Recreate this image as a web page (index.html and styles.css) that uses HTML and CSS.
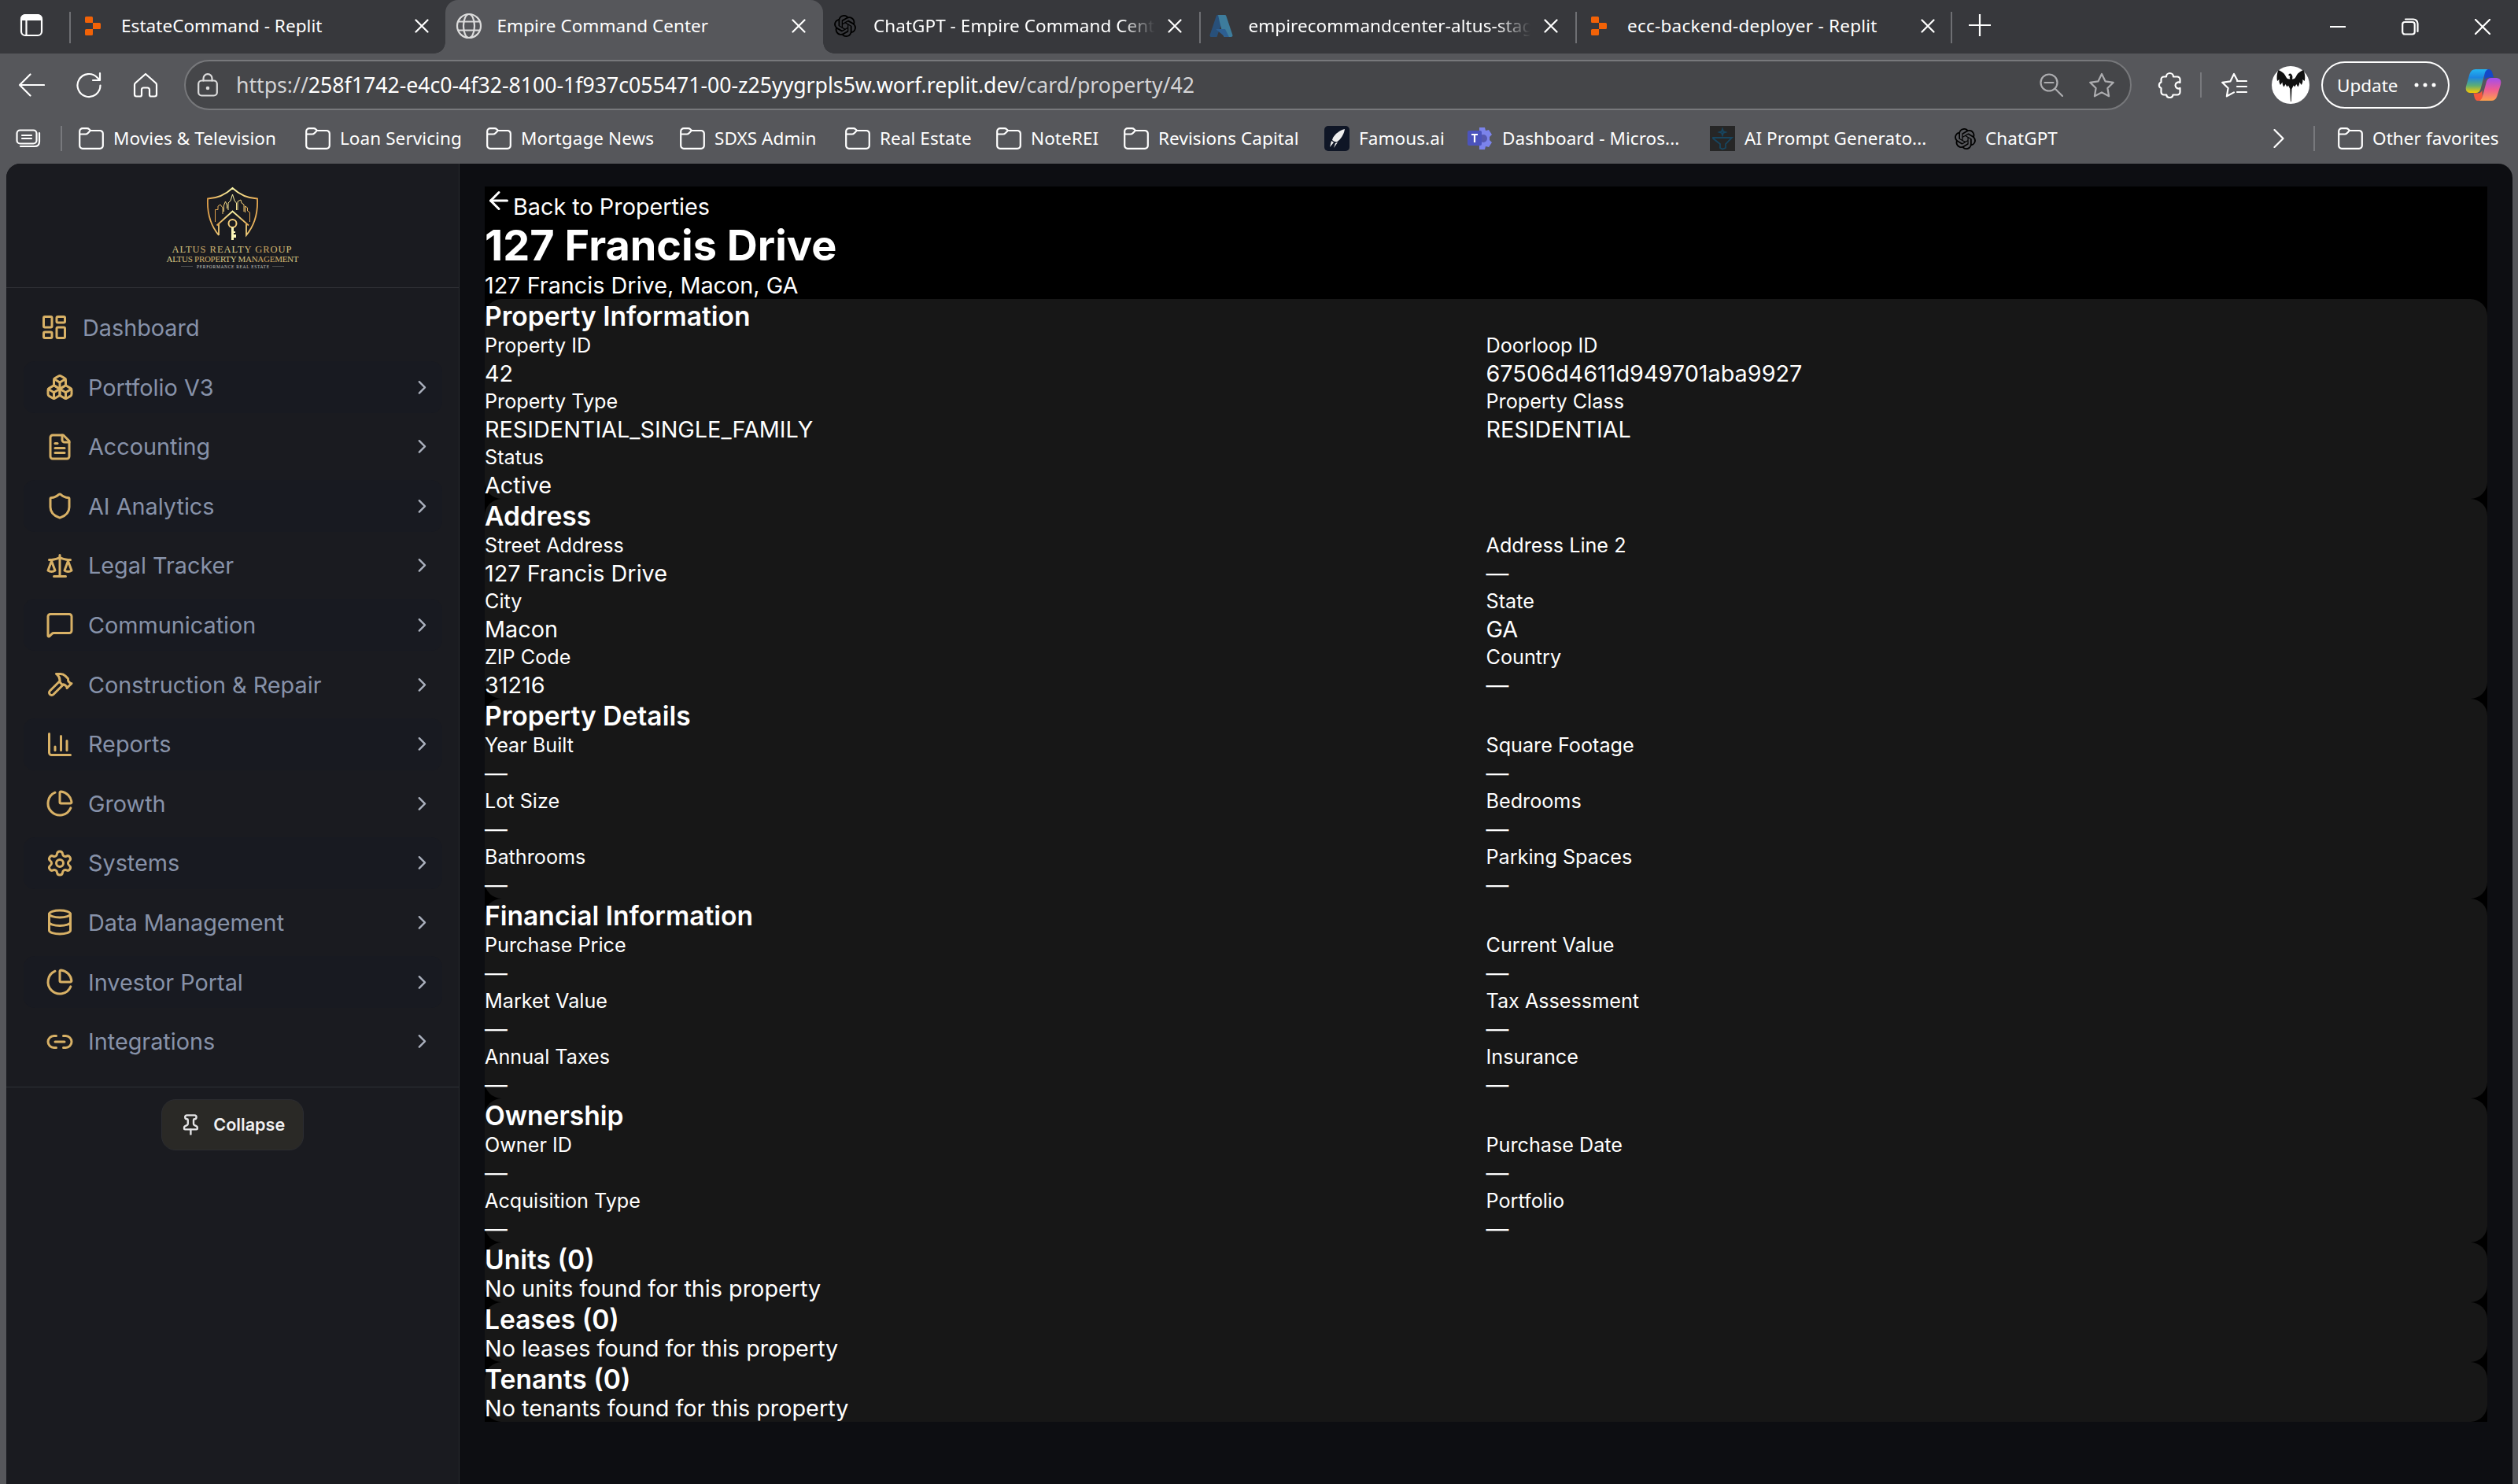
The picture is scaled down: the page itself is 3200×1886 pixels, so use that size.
FILE: index.html
```html
<!DOCTYPE html>
<html lang="en">
<head>
<meta charset="utf-8">
<title>Empire Command Center</title>
<link rel="stylesheet" href="styles.css">
</head>
<body>
<svg class="sprite" aria-hidden="true">
  <symbol id="i-x" viewBox="0 0 18 18"><path d="M1.5 1.5l15 15M16.500 1.500l-15 15"/></symbol>
  <symbol id="i-folder" viewBox="0 0 32 28"><path d="M1.200 8.500h7.600a4 4 0 0 0 2.800-1.200l2.300-2.400M1.200 8V5A3.800 3.800 0 0 1 5 1.200h5.600a4 4 0 0 1 2.700 1.100l1.800 1.700h11.900A3.800 3.800 0 0 1 30.800 7.800v15.200a3.800 3.800 0 0 1-3.800 3.800H5A3.800 3.800 0 0 1 1.200 23z"/></symbol>
  <symbol id="i-replit" viewBox="0 0 20 24"><path d="M1.500 0h7A1.500 1.500 0 0 1 10 1.500V8H1.500A1.500 1.500 0 0 1 0 6.500v-5A1.500 1.500 0 0 1 1.500 0zM10 8h8.500A1.500 1.500 0 0 1 20 9.500v5a1.500 1.500 0 0 1-1.500 1.500H10zM1.500 16H10v6.500A1.500 1.500 0 0 1 8.500 24h-7A1.500 1.500 0 0 1 0 22.500v-5A1.500 1.500 0 0 1 1.500 16z"/></symbol>
  <symbol id="i-knot" viewBox="0 0 24 24"><path d="M22.2819 9.8211a5.9847 5.9847 0 0 0-.5157-4.9108 6.0462 6.0462 0 0 0-6.5098-2.9A6.0651 6.0651 0 0 0 4.9807 4.1818a5.9847 5.9847 0 0 0-3.9977 2.9 6.0462 6.0462 0 0 0 .7427 7.0966 5.98 5.98 0 0 0 .511 4.9107 6.051 6.051 0 0 0 6.5146 2.9001A5.9847 5.9847 0 0 0 13.2599 24a6.0557 6.0557 0 0 0 5.7718-4.2058 5.9894 5.9894 0 0 0 3.9977-2.9001 6.0557 6.0557 0 0 0-.7475-7.0729zm-9.022 12.6081a4.4755 4.4755 0 0 1-2.8764-1.0408l.1419-.0804 4.7783-2.7582a.7948.7948 0 0 0 .3927-.6813v-6.7369l2.02 1.1686a.071.071 0 0 1 .038.052v5.5826a4.504 4.504 0 0 1-4.4945 4.4944zm-9.6607-4.1254a4.4708 4.4708 0 0 1-.5346-3.0137l.142.0852 4.783 2.7582a.7712.7712 0 0 0 .7806 0l5.8428-3.3685v2.3324a.0804.0804 0 0 1-.0332.0615L9.74 19.9502a4.4992 4.4992 0 0 1-6.1408-1.6464zM2.3408 7.8956a4.485 4.485 0 0 1 2.3655-1.9728V11.6a.7664.7664 0 0 0 .3879.6765l5.8144 3.3543-2.0201 1.1685a.0757.0757 0 0 1-.071 0l-4.8303-2.7865A4.504 4.504 0 0 1 2.3408 7.872zm16.5963 3.8558L13.1038 8.364 15.1192 7.2a.0757.0757 0 0 1 .071 0l4.8303 2.7913a4.4944 4.4944 0 0 1-.6765 8.1042v-5.6772a.79.79 0 0 0-.407-.667zm2.0107-3.0231l-.142-.0852-4.7735-2.7818a.7759.7759 0 0 0-.7854 0L9.409 9.2297V6.8974a.0662.0662 0 0 1 .0284-.0615l4.8303-2.7866a4.4992 4.4992 0 0 1 6.6802 4.66zM8.3065 12.863l-2.02-1.1638a.0804.0804 0 0 1-.038-.0567V6.0742a4.4992 4.4992 0 0 1 7.3757-3.4537l-.142.0805L8.704 5.459a.7948.7948 0 0 0-.3927.6813zm1.0976-2.3654l2.602-1.4998 2.6069 1.4998v2.9994l-2.5974 1.4997-2.6067-1.4997Z"/></symbol>
  <symbol id="i-chevron" viewBox="0 0 24 24"><path d="m9 18 6-6-6-6"/></symbol>
  <symbol id="i-pie" viewBox="0 0 24 24"><path d="M21 12c.552 0 1.005-.449.95-.998a10 10 0 0 0-8.953-8.951c-.55-.055-.998.398-.998.95v8a1 1 0 0 0 1 1z"/><path d="M21.210 15.890A10 10 0 1 1 8 2.830"/></symbol>
</svg>

<header class="chrome">
  <div class="tabstrip">
    <div class="tab-actions"><svg width="30" height="30" viewBox="0 0 30 30" class="line"><rect x="2" y="2" width="26" height="26" rx="5"/><path d="M2 8a6 6 0 0 1 6-6h14a6 6 0 0 1 6 6z" fill="#fff"/><path d="M8.500 8v20"/></svg></div>
    <div class="tab">
      <svg class="fav replit" width="20" height="24"><use href="#i-replit"/></svg>
      <span class="tab-title">EstateCommand - Replit</span>
      <svg class="close line" width="18" height="18"><use href="#i-x"/></svg>
    </div>
    <div class="tab active">
      <svg class="fav line soft" width="34" height="34" viewBox="0 0 34 34"><circle cx="17" cy="17" r="15"/><ellipse cx="17" cy="17" rx="7" ry="15"/><path d="M3.500 11.500h27M3.500 22.500h27"/></svg>
      <span class="tab-title">Empire Command Center</span>
      <svg class="close line" width="18" height="18"><use href="#i-x"/></svg>
    </div>
    <div class="tab">
      <svg class="fav" width="28" height="28"><use href="#i-knot"/></svg>
      <span class="tab-title fade">ChatGPT - Empire Command Center</span>
      <svg class="close line" width="18" height="18"><use href="#i-x"/></svg>
    </div>
    <div class="tab">
      <svg class="fav" width="30" height="28" viewBox="0 0 30 28"><path d="M10 0h9L9.500 28H2.500a2 2 0 0 1-1.900-2.700L8.700 1.500Q9.200 0 10 0z" fill="#28507a"/><path d="M11 0h8.500a2 2 0 0 1 1.900 1.400l8 24A2 2 0 0 1 27.500 28H20q-1.600 0-2.200-1.600L15 17l-2-8z" fill="#3d7c9c"/><path d="M8 18h12l5 10h-5z" fill="#2d5f92"/></svg>
      <span class="tab-title fade">empirecommandcenter-altus-staging</span>
      <svg class="close line" width="18" height="18"><use href="#i-x"/></svg>
    </div>
    <div class="tab">
      <svg class="fav replit" width="20" height="24"><use href="#i-replit"/></svg>
      <span class="tab-title wide">ecc-backend-deployer - Replit</span>
      <svg class="close line" width="18" height="18"><use href="#i-x"/></svg>
    </div>
    <svg class="new-tab line" width="28" height="28" viewBox="0 0 28 28"><path d="M14 0v28M0 14h28"/></svg>
    <div class="window-buttons">
      <svg class="line" width="20" height="20" viewBox="0 0 20 20"><path d="M0 10h20"/></svg>
      <svg class="line" width="22" height="22" viewBox="0 0 22 22"><rect x="1.200" y="5" width="15.500" height="15.500" rx="3"/><path d="M5 1.500h10a5.500 5.500 0 0 1 5.500 5.500v10"/></svg>
      <svg class="line" width="20" height="20" viewBox="0 0 20 20"><path d="M0.500 0.500l19 19M19.500 0.500l-19 19"/></svg>
    </div>
  </div>

  <div class="toolbar">
    <div class="nav-buttons">
      <svg class="line" width="34" height="32" viewBox="0 0 34 32"><path d="M33 16H2M15.500 2.500L2 16l13.500 13.500"/></svg>
      <svg class="line" width="34" height="34" viewBox="0 0 34 34"><path d="M31.500 17.500A14.500 14.500 0 1 1 27.500 7.500L30.500 10.500M31 2v9h-9"/></svg>
      <svg class="line" width="32" height="32" viewBox="0 0 32 32"><path d="M16 2L3 13.500a3 3 0 0 0-1 2.200V28a2.500 2.500 0 0 0 2.500 2.500h4.500a2 2 0 0 0 2-2V22a2.500 2.500 0 0 1 2.500-2.500h5a2.500 2.500 0 0 1 2.500 2.500v6.500a2 2 0 0 0 2 2h4.500A2.500 2.500 0 0 0 30 28V15.700a3 3 0 0 0-1-2.200z"/></svg>
    </div>
    <div class="address">
      <svg class="line soft" width="26" height="30" viewBox="0 0 26 30"><rect x="1.200" y="9.500" width="23.600" height="19" rx="4"/><path d="M7.500 9.500V6.700a5.500 5.500 0 0 1 11 0v2.800"/><circle cx="13" cy="19" r="1.200" fill="#ddd"/></svg>
      <span class="url"><span class="dim">https://</span>258f1742-e4c0-4f32-8100-1f937c055471-00-z25yygrpls5w.worf.replit.dev<span class="dim">/card/property/42</span></span>
      <svg class="line faint" width="30" height="30" viewBox="0 0 30 30"><circle cx="12" cy="12" r="10.500"/><path d="M19.500 19.500l9.500 9.500M6.500 12h11"/></svg>
      <svg class="line faint star" width="34" height="32" viewBox="0 0 34 32"><path d="M17 2l4.500 9.300 10.300 1.500-7.400 7.200 1.700 10.300L17 25.400l-9.100 4.900 1.700-10.300-7.400-7.200 10.300-1.500z"/></svg>
    </div>
    <svg class="line puzzle" width="30" height="34" viewBox="0 0 30 34"><path d="M11 6.500a4.500 4.500 0 0 1 9 0h5a3.500 3.500 0 0 1 3.500 3.500v4a4 4 0 1 0 0 7v5a3.500 3.500 0 0 1-3.500 3.500h-5.500a4.200 4.200 0 0 1-8.300 0H8A3.500 3.500 0 0 1 4.500 26v-5a4 4 0 0 1 0-7.500V10A3.500 3.500 0 0 1 8 6.500z"/></svg>
    <span class="rule"></span>
    <svg class="line favs" width="34" height="32" viewBox="0 0 34 32"><path d="M21 9.500L17 2l-4.500 9.300-10.300 1.500 7.400 7.200-1.700 10.300L17 25.400M21 11h12M21 18h12M21 25h12"/></svg>
    <svg class="avatar" width="48" height="48" viewBox="0 0 48 48"><circle cx="24" cy="24" r="24" fill="#fff"/><path d="M23.500 9.500c-1.500 0-2.500 1.200-2 2.500l2.200.8c-1.200 1-1 2.700-.2 3.700-3.500.5-5-1.500-6.500-5C15.500 8.500 11 6 8.500 5c-2 4-2.500 10-1.500 14l2.500-2c-.5 3 .5 5 1.500 7l2.500-3.500c0 2 .5 4 2 6l2-3.500 2 3.500 1.500-2 2.300 4.500.7 16h.8l.7-16 2.300-4.500 1.500 2 2-3.500 2 3.500c1.500-2 2-4 2-6l2.500 3.500c1-2 2-4 1.500-7l2.500 2c1-4 .5-10-1.500-14-2.500 1-7 3.500-8.500 6.500-1.500 3.500-3 5.500-6 5 1-1.500.8-4-.3-5.500-.5-.9-1-1.500-2.500-1.500z" fill="#111"/></svg>
    <div class="update"><span>Update</span><svg width="28" height="6" viewBox="0 0 28 6"><g fill="#fff"><circle cx="3" cy="3" r="2.500"/><circle cx="14" cy="3" r="2.500"/><circle cx="25" cy="3" r="2.500"/></g></svg></div>
    <svg class="copilot" width="46" height="42" viewBox="0 0 46 42">
      <defs>
        <linearGradient id="cp1" x1="0" y1="0" x2="0" y2="1"><stop offset="0" stop-color="#23b4f0"/><stop offset=".35" stop-color="#1c86e0"/><stop offset=".7" stop-color="#5fae72"/><stop offset="1" stop-color="#fdc900"/></linearGradient>
        <linearGradient id="cp2" x1="0" y1="0" x2="0" y2="1"><stop offset="0" stop-color="#a14df0"/><stop offset=".5" stop-color="#ee5a94"/><stop offset="1" stop-color="#fda14c"/></linearGradient>
      </defs>
      <path d="M24 1h5.500q3.500 0 4.600 3.600l2 7H30q-4 0-5.500 4z" fill="#1448c8"/>
      <path d="M22 41h-5.500q-3.500 0-4.600-3.600l-1.500-6H16q4 0 5.500-4z" fill="#f5583c"/>
      <path d="M13 1h16q-3 .8-4.200 5l-5.300 20q-1.500 5-6 5H6q-7-1-4.800-9L5.500 7Q7.500 1 13 1z" fill="url(#cp1)"/>
      <path d="M33 41H17.500q3-.8 4.200-5L27 16.500q1.500-4.500 6-4.500h7q7 1 4.800 9L40.500 35Q38.500 41 33 41z" fill="url(#cp2)"/>
    </svg>
  </div>

  <div class="bookmarks">
    <svg class="line workspaces" width="32" height="24" viewBox="0 0 32 24"><rect x="1.500" y="1.500" width="25" height="17" rx="4"/><path d="M8 8h12M8 12h12M30 5v11q0 6-6 6H6"/></svg>
    <span class="rule"></span>
    <div class="bookmark-list">
      <span class="bm"><svg class="line" width="32" height="28"><use href="#i-folder"/></svg><span>Movies &amp; Television</span></span>
      <span class="bm"><svg class="line" width="32" height="28"><use href="#i-folder"/></svg><span>Loan Servicing</span></span>
      <span class="bm"><svg class="line" width="32" height="28"><use href="#i-folder"/></svg><span>Mortgage News</span></span>
      <span class="bm"><svg class="line" width="32" height="28"><use href="#i-folder"/></svg><span>SDXS Admin</span></span>
      <span class="bm"><svg class="line" width="32" height="28"><use href="#i-folder"/></svg><span>Real Estate</span></span>
      <span class="bm"><svg class="line" width="32" height="28"><use href="#i-folder"/></svg><span>NoteREI</span></span>
      <span class="bm"><svg class="line" width="32" height="28"><use href="#i-folder"/></svg><span>Revisions Capital</span></span>
      <span class="bm"><svg width="32" height="32" viewBox="0 0 32 32"><rect width="32" height="32" rx="5" fill="#0f1626"/><path d="M26 4C19 6 14 10 11 15l-1 3 3 2 3 .5C21 17 25 11 26 4zM9 19l-2 8 5-6zM14 22l-2 6 5-7z" fill="#eee"/></svg><span>Famous.ai</span></span>
      <span class="bm"><svg width="32" height="28" viewBox="0 0 32 28"><path d="M15 0h7l1 4 4-1 4 6-3 3v4l3 3-4 6-4-1-1 4h-7z" fill="#7b83eb"/><circle cx="20" cy="14" r="5" fill="#5558af"/><rect y="4" width="18" height="19" rx="2" fill="#4b53bc"/><path d="M5 9h8M9 9v10" stroke="#fff" stroke-width="2.200"/></svg><span>Dashboard - Micros...</span></span>
      <span class="bm"><svg width="32" height="32" viewBox="0 0 32 32"><rect width="32" height="32" fill="#262626"/><g fill="none" stroke="#17455f" stroke-width="1.800"><path d="M16 4l1 3 3 1-3 1-1 3-1-3-3-1 3-1z"/><path d="M4 15h24l-8 8v5l-4 1.500-3-1.500v-5L4 16z"/></g></svg><span>AI Prompt Generato...</span></span>
      <span class="bm"><svg width="27" height="27"><use href="#i-knot"/></svg><span>ChatGPT</span></span>
    </div>
    <svg class="line more" width="14" height="24" viewBox="0 0 14 24"><path d="M1.500 1l11 11-11 11"/></svg>
    <span class="rule"></span>
    <span class="bm other"><svg class="line" width="32" height="28"><use href="#i-folder"/></svg><span>Other favorites</span></span>
  </div>
</header>

<div class="app">
  <aside class="sidebar">
    <div class="brand">
      <svg width="210" height="130" viewBox="0 0 210 130">
        <defs><linearGradient id="gold" x1="0" x2="1"><stop offset="0" stop-color="#e0a04a"/><stop offset=".5" stop-color="#fbf6a8"/><stop offset="1" stop-color="#e6a850"/></linearGradient>
        <linearGradient id="goldtext" x1="0" x2="1"><stop offset="0" stop-color="#ddd088"/><stop offset=".3" stop-color="#c9a562"/><stop offset=".5" stop-color="#e0d892"/><stop offset=".75" stop-color="#c9a05c"/><stop offset="1" stop-color="#ddd088"/></linearGradient></defs>
        <g fill="none" stroke="url(#gold)" stroke-width="1.800" stroke-linejoin="miter">
          <path d="M88 74C78 62 73 46 74 27.500 86 27 97 22 105.500 14 114 22 125 27 137 27.500 138 46 133 62 123 74V60M88 74V60"/>
          <path d="M85.500 61.500L105.500 43.500l20.500 18"/>
          <path stroke-width="1" d="M83.500 57V41.500h3.500V37l3-2 3 4v8M94.500 44V36l2-5 2 5v4M100 42V33l3-3 2.500-8 2.500 8 2.500 3v9M112 42V31l4-2 1 4 3 2v9M121.500 45v-8l3 2v4l3 2v12"/>
        </g>
        <circle cx="105.500" cy="59" r="5" fill="none" stroke="#f6cf7d" stroke-width="2"/><path d="M104 64h3v5h2v2h-2v2h3v4h-3v3h-3z" fill="#fbf6b8"/>
        <g font-family="Liberation Serif, serif" text-anchor="middle" fill="url(#goldtext)">
          <text x="104.500" y="95.500" font-size="12.500" textLength="152">ALTUS REALTY GROUP</text>
          <text x="105.500" y="107.500" font-size="11" textLength="168">ALTUS PROPERTY MANAGEMENT</text>
          <text x="106" y="115.500" font-size="5.500" textLength="92" fill="#c8c8c0">PERFORMANCE REAL ESTATE</text>
        </g>
        <path d="M40 113.500h15M156 113.500h15" stroke="#4a4b4e"/>
      </svg>
    </div>
    <nav class="menu">
      <a class="item top"><svg class="ico" viewBox="0 0 24 24"><rect width="7" height="9" x="3" y="3" rx="1"/><rect width="7" height="5" x="14" y="3" rx="1"/><rect width="7" height="9" x="14" y="12" rx="1"/><rect width="7" height="5" x="3" y="16" rx="1"/></svg><span>Dashboard</span></a>
      <a class="item"><svg class="ico" viewBox="0 0 24 24"><path d="M2.970 12.920A2 2 0 0 0 2 14.630v3.240a2 2 0 0 0 .970 1.710l3 1.800a2 2 0 0 0 2.060 0L12 19v-5.500l-5-3-4.030 2.420Z"/><path d="m7 16.500-4.740-2.850"/><path d="m7 16.500 5-3"/><path d="M7 16.500v5.170"/><path d="M12 13.500V19l3.970 2.380a2 2 0 0 0 2.060 0l3-1.800a2 2 0 0 0 .970-1.710v-3.240a2 2 0 0 0-.970-1.710L17 10.500l-5 3Z"/><path d="m17 16.500-5-3"/><path d="m17 16.500 4.740-2.850"/><path d="M17 16.500v5.170"/><path d="M7.970 4.420A2 2 0 0 0 7 6.130v4.370l5 3 5-3V6.130a2 2 0 0 0-.970-1.710l-3-1.800a2 2 0 0 0-2.060 0l-3 1.800Z"/><path d="M12 8 7.260 5.150"/><path d="m12 8 4.740-2.850"/><path d="M12 13.500V8"/></svg><span>Portfolio V3</span><svg class="chev"><use href="#i-chevron"/></svg></a>
      <a class="item"><svg class="ico" viewBox="0 0 24 24"><path d="M15 2H6a2 2 0 0 0-2 2v16a2 2 0 0 0 2 2h12a2 2 0 0 0 2-2V7Z"/><path d="M14 2v4a2 2 0 0 0 2 2h4"/><path d="M10 9H8"/><path d="M16 13H8"/><path d="M16 17H8"/></svg><span>Accounting</span><svg class="chev"><use href="#i-chevron"/></svg></a>
      <a class="item"><svg class="ico" viewBox="0 0 24 24"><path d="M20 13c0 5-3.500 7.500-7.660 8.950a1 1 0 0 1-.670-.010C7.500 20.500 4 18 4 13V6a1 1 0 0 1 1-1c2 0 4.500-1.200 6.240-2.720a1.170 1.170 0 0 1 1.520 0C14.510 3.810 17 5 19 5a1 1 0 0 1 1 1z"/></svg><span>AI Analytics</span><svg class="chev"><use href="#i-chevron"/></svg></a>
      <a class="item"><svg class="ico" viewBox="0 0 24 24"><path d="m16 16 3-8 3 8c-.870.650-1.920 1-3 1s-2.130-.350-3-1Z"/><path d="m2 16 3-8 3 8c-.870.650-1.920 1-3 1s-2.130-.350-3-1Z"/><path d="M7 21h10"/><path d="M12 3v18"/><path d="M3 7h2c2 0 5-1 7-2 2 1 5 2 7 2h2"/></svg><span>Legal Tracker</span><svg class="chev"><use href="#i-chevron"/></svg></a>
      <a class="item"><svg class="ico" viewBox="0 0 24 24"><path d="M22 17a2 2 0 0 1-2 2H6.828a2 2 0 0 0-1.414.586l-2.202 2.202A.710.710 0 0 1 2 21.286V5a2 2 0 0 1 2-2h16a2 2 0 0 1 2 2z"/></svg><span>Communication</span><svg class="chev"><use href="#i-chevron"/></svg></a>
      <a class="item"><svg class="ico" viewBox="0 0 24 24"><path d="m15 12-8.373 8.373a1 1 0 1 1-3-3L12 9"/><path d="m18 15 4-4"/><path d="m21.500 11.500-1.914-1.914A2 2 0 0 1 19 8.172V7l-2.260-2.260a6 6 0 0 0-4.202-1.756L9 2.960l.920.820A6.180 6.180 0 0 1 12 8.400V10l2 2h1.172a2 2 0 0 1 1.414.586L18.500 14.500"/></svg><span>Construction &amp; Repair</span><svg class="chev"><use href="#i-chevron"/></svg></a>
      <a class="item"><svg class="ico" viewBox="0 0 24 24"><path d="M3 3v16a2 2 0 0 0 2 2h16"/><path d="M18 17V9"/><path d="M13 17V5"/><path d="M8 17v-3"/></svg><span>Reports</span><svg class="chev"><use href="#i-chevron"/></svg></a>
      <a class="item"><svg class="ico"><use href="#i-pie"/></svg><span>Growth</span><svg class="chev"><use href="#i-chevron"/></svg></a>
      <a class="item"><svg class="ico" viewBox="0 0 24 24"><path d="M9.671 4.136a2.340 2.340 0 0 1 4.659 0 2.340 2.340 0 0 0 3.319 1.915 2.340 2.340 0 0 1 2.330 4.033 2.340 2.340 0 0 0 0 3.831 2.340 2.340 0 0 1-2.330 4.033 2.340 2.340 0 0 0-3.319 1.915 2.340 2.340 0 0 1-4.659 0 2.340 2.340 0 0 0-3.320-1.915 2.340 2.340 0 0 1-2.330-4.033 2.340 2.340 0 0 0 0-3.831A2.340 2.340 0 0 1 6.350 6.051a2.340 2.340 0 0 0 3.319-1.915"/><circle cx="12" cy="12" r="3"/></svg><span>Systems</span><svg class="chev"><use href="#i-chevron"/></svg></a>
      <a class="item"><svg class="ico" viewBox="0 0 24 24"><ellipse cx="12" cy="5" rx="9" ry="3"/><path d="M3 5v14a9 3 0 0 0 18 0V5"/><path d="M3 12a9 3 0 0 0 18 0"/></svg><span>Data Management</span><svg class="chev"><use href="#i-chevron"/></svg></a>
      <a class="item"><svg class="ico"><use href="#i-pie"/></svg><span>Investor Portal</span><svg class="chev"><use href="#i-chevron"/></svg></a>
      <a class="item"><svg class="ico" viewBox="0 0 24 24"><path d="M9 17H7A5 5 0 0 1 7 7h2"/><path d="M15 7h2a5 5 0 1 1 0 10h-2"/><path d="M8 12h8"/></svg><span>Integrations</span><svg class="chev"><use href="#i-chevron"/></svg></a>
    </nav>
    <div class="sidebar-foot">
      <button class="collapse"><svg viewBox="0 0 24 24"><path d="M12 17v5"/><path d="M9 10.760a2 2 0 0 1-1.110 1.790l-1.780.900A2 2 0 0 0 5 15.240V16a1 1 0 0 0 1 1h12a1 1 0 0 0 1-1v-.760a2 2 0 0 0-1.110-1.790l-1.780-.900A2 2 0 0 1 15 10.760V7a1 1 0 0 1 1-1 2 2 0 0 0 0-4H8a2 2 0 0 0 0 4 1 1 0 0 1 1 1z"/></svg>Collapse</button>
    </div>
  </aside>

  <main class="page">
    <div class="property">
      <a class="back"><svg viewBox="0 0 24 24"><path d="m12 19-7-7 7-7"/><path d="M19 12H5"/></svg>Back to Properties</a>
      <h1>127 Francis Drive</h1>
      <p>127 Francis Drive, Macon, GA</p>

      <section class="card"><h2>Property Information</h2>
        <dl class="fields">
          <div><dt>Property ID</dt><dd>42</dd></div><div><dt>Doorloop ID</dt><dd>67506d4611d949701aba9927</dd></div>
          <div><dt>Property Type</dt><dd>RESIDENTIAL_SINGLE_FAMILY</dd></div><div><dt>Property Class</dt><dd>RESIDENTIAL</dd></div>
          <div><dt>Status</dt><dd>Active</dd></div>
        </dl></section>
      <section class="card"><h2>Address</h2>
        <dl class="fields">
          <div><dt>Street Address</dt><dd>127 Francis Drive</dd></div><div><dt>Address Line 2</dt><dd>—</dd></div>
          <div><dt>City</dt><dd>Macon</dd></div><div><dt>State</dt><dd>GA</dd></div>
          <div><dt>ZIP Code</dt><dd>31216</dd></div><div><dt>Country</dt><dd>—</dd></div>
        </dl></section>
      <section class="card"><h2>Property Details</h2>
        <dl class="fields">
          <div><dt>Year Built</dt><dd>—</dd></div><div><dt>Square Footage</dt><dd>—</dd></div>
          <div><dt>Lot Size</dt><dd>—</dd></div><div><dt>Bedrooms</dt><dd>—</dd></div>
          <div><dt>Bathrooms</dt><dd>—</dd></div><div><dt>Parking Spaces</dt><dd>—</dd></div>
        </dl></section>
      <section class="card"><h2>Financial Information</h2>
        <dl class="fields">
          <div><dt>Purchase Price</dt><dd>—</dd></div><div><dt>Current Value</dt><dd>—</dd></div>
          <div><dt>Market Value</dt><dd>—</dd></div><div><dt>Tax Assessment</dt><dd>—</dd></div>
          <div><dt>Annual Taxes</dt><dd>—</dd></div><div><dt>Insurance</dt><dd>—</dd></div>
        </dl></section>
      <section class="card"><h2>Ownership</h2>
        <dl class="fields">
          <div><dt>Owner ID</dt><dd>—</dd></div><div><dt>Purchase Date</dt><dd>—</dd></div>
          <div><dt>Acquisition Type</dt><dd>—</dd></div><div><dt>Portfolio</dt><dd>—</dd></div>
        </dl></section>
      <section class="card"><h2>Units (0)</h2><p>No units found for this property</p></section>
      <section class="card"><h2>Leases (0)</h2><p>No leases found for this property</p></section>
      <section class="card"><h2>Tenants (0)</h2><p>No tenants found for this property</p></section>
    </div>
  </main>
</div>
</body>
</html>
```
FILE: styles.css
```css
* { box-sizing: border-box; margin: 0; padding: 0; }
body { width: 3200px; height: 1886px; overflow: hidden; display: flex; flex-direction: column; background: #56575b; color: #fff; font-family: Inter, sans-serif; font-size: 28.8px; }
svg { display: block; flex: none; }
.sprite { display: none; }
.line { fill: none; stroke: #fff; stroke-width: 2.2; stroke-linecap: round; stroke-linejoin: round; }
.soft { stroke: #dcdcdc; }
.faint { stroke: #adadb0; }

/* Browser frame */
.chrome { height: 208px; flex: none; font-family: "Noto Sans", sans-serif; font-size: 22.5px; }
.tabstrip { height: 68px; background: #37383c; display: flex; align-items: center; }
.tab-actions { width: 88px; padding-left: 25px; padding-bottom: 4px; }
.tab { position: relative; width: 478.5px; height: 68px; padding-bottom: 3px; display: flex; align-items: center; }
.tab + .tab:not(.active)::before, .tab:nth-child(2)::before, .tab:nth-child(6)::after { content: ""; position: absolute; left: 0; top: 15px; width: 2px; height: 40px; background: #6e6f73; }
.tab:nth-child(6)::after { left: auto; right: 0; }
.tab.active + .tab::before { display: none; }
.tab .fav { margin: 0 4px 0 16px; }
.tab .fav[width="34"] { margin: 0 19px 0 13px; }
.tab .fav[width="28"] { margin: 0 22px 0 15px; }
.tab .fav[width="30"] { margin: 0 20px 0 13px; }
.tab .fav.replit { margin: 0 26px 0 20px; }
.replit { fill: #f26207; }
.tab-title { width: 358px; padding-bottom: 1px; overflow: hidden; white-space: nowrap; letter-spacing: .05px; }
.tab-title.wide { letter-spacing: .25px; }
.fade { -webkit-mask-image: linear-gradient(90deg, #000 88%, transparent); mask-image: linear-gradient(90deg, #000 88%, transparent); }
.tab .close { margin-left: auto; margin-right: 22px; }
.tab.active { background: #56575b; border-radius: 16px 16px 0 0; margin: 0 -1px; width: 480.5px; }
.tab.active::before, .tab.active::after { content: ""; position: absolute; bottom: 0; width: 14px; height: 14px; }
.tab.active::before { left: -14px; background: radial-gradient(circle at 0 0, transparent 13.5px, #56575b 14px); }
.tab.active::after { right: -14px; background: radial-gradient(circle at 100% 0, transparent 13.5px, #56575b 14px); }
.new-tab { margin-left: 21px; margin-bottom: 5px; }
.window-buttons { margin-left: auto; display: flex; align-items: center; gap: 71px; padding-right: 35px; }

.toolbar { height: 80px; display: flex; align-items: center; }
.nav-buttons { width: 234px; padding-left: 23px; display: flex; align-items: center; gap: 39px; }
.address { width: 2475px; height: 64px; border: 2px solid #77787b; border-radius: 32px; background: #454649; display: flex; align-items: center; padding-left: 15px; }
.url { margin-left: 23px; margin-bottom: 1px; font-size: 26.65px; width: 2292px; white-space: nowrap; }
.dim { color: #d4d4d6; }
.address .star { margin-left: 32px; }
.puzzle { margin-left: 33px; }
.rule { width: 2px; height: 32px; background: #78797d; flex: none; }
.toolbar .rule { margin: 0 24px; }
.avatar { margin-left: 31px; }
.update { margin-left: 15px; width: 163px; height: 60px; border: 2px solid #fff; border-radius: 30px; display: flex; align-items: center; gap: 20px; padding-left: 18px; white-space: nowrap; }
.copilot { margin-left: 20px; }

.bookmarks { height: 56px; display: flex; align-items: center; padding-left: 20px; }
.bookmarks .rule { margin-left: 25px; }
.bookmark-list { margin-left: 21px; width: 2789px; display: grid; grid-template-columns: 288px 230px 246px 210px 192px 162px 255px 182px 308px 311px 1fr; }
.bm { display: flex; align-items: center; gap: 12px; white-space: nowrap; }
.bm span { padding-bottom: 2px; letter-spacing: .08px; }
.bookmarks .more + .rule { margin-left: 37px; }
.other { margin-left: 29px; }

/* Application */
.app { height: 1678px; margin: 0 7px 0 8px; border-radius: 18px 18px 0 0; overflow: hidden; display: flex; background: #0d0e12; }
.sidebar { width: 576px; background: #1a1b20; border-right: 1px solid #2b2d32; }
.brand { height: 158px; border-bottom: 1px solid #2e3035; display: flex; justify-content: center; padding: 17px 2px 0 0; }
.menu { height: 1016px; padding: 17.5px 21px 0 22px; display: flex; flex-direction: column; gap: 9.6px; border-bottom: 1px solid #2e3035; color: #8792a9; }
.item { height: 66px; border-radius: 14px; display: flex; align-items: center; padding: 0 11px 0 28px; }
.item:nth-child(even) { background: #181a21; }
.item.top { padding-left: 21px; padding-bottom: 1px; }
.ico { width: 36px; height: 36px; fill: none; stroke: #d8b166; stroke-width: 2; stroke-linecap: round; stroke-linejoin: round; }
.item span { margin-left: 18px; }
.chev { width: 28.8px; height: 28.8px; margin-left: auto; fill: none; stroke: #aab0bd; stroke-width: 2; stroke-linecap: round; stroke-linejoin: round; }
.sidebar-foot { display: flex; justify-content: center; padding: 15px 1px 0 0; }
.collapse { width: 181px; height: 65px; border: 1px solid #2c2d31; border-radius: 18px; background: #2a2926; color: #f1f1f2; font: 600 21.6px Inter, sans-serif; display: flex; align-items: center; padding: 0 0 1px 22px; gap: 15px; }
.collapse svg { width: 28.8px; height: 28.8px; fill: none; stroke: #e4e4e6; stroke-width: 2; stroke-linecap: round; stroke-linejoin: round; }

.page { flex: 1; padding: 29px 32px 0; }
.property { background: #000; }
.back { display: block; height: 43px; line-height: 35px; }
.back svg { display: inline-block; width: 36px; height: 36px; vertical-align: baseline; fill: none; stroke: #fff; stroke-width: 2; stroke-linecap: round; stroke-linejoin: round; }
h1 { height: 65px; font-size: 54px; line-height: 63px; font-weight: 700; }
p, dd { line-height: 35px; }
h2 { height: 41px; padding-top: 1px; font-size: 33.6px; line-height: 41px; font-weight: 600; }
dt { height: 36px; font-size: 25.2px; line-height: 37px; }
.card { background: #171717; border-radius: 21.6px; }
.fields { display: grid; grid-template-columns: 1fr 1fr; }
```
